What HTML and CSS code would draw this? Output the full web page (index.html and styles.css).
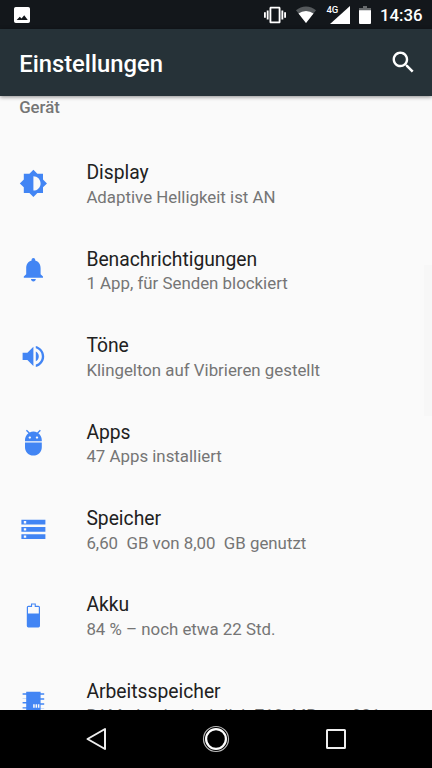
FILE: index.html
```html
<!DOCTYPE html>
<html lang="de">
<head>
<meta charset="utf-8">
<title>Einstellungen</title>
<link rel="stylesheet" href="styles.css">
</head>
<body>
<div class="screen">
  <div class="status">
    <svg class="st-photo" viewBox="0 0 18 18"><path fill="#fff" fill-rule="evenodd" d="M2 0h14q2 0 2 2v14q0 2-2 2H2q-2 0-2-2V2q0-2 2-2zM3 14.6h12.5l-4-5.2-3 3.6-2-2z"/></svg>
    <span class="spacer"></span>
    <svg class="st-vib" viewBox="0 0 24 24"><path fill="#fff" d="M0 15h2V9H0v6zm3 2h2V7H3v10zm19-8v6h2V9h-2zm-3 8h2V7h-2v10zM16.500 3h-9C6.670 3 6 3.670 6 4.500v15c0 .830.670 1.500 1.500 1.500h9c.830 0 1.500-.670 1.500-1.500v-15c0-.830-.670-1.500-1.500-1.500zM16 19H8V5h8v14z"/></svg>
    <svg class="st-wifi" viewBox="0 0 20 17"><path fill="#55595c" d="M10 17 0 4.300Q4.300.500 10 .500T20 4.300z"/><path fill="#fff" d="M10 17 2.500 7.500Q5.800 5 10 5t7.500 2.500z"/></svg>
    <span class="net"><span class="gen">4G</span><svg class="st-cell" viewBox="0 0 20 18"><path fill="#fff" d="M20 0v18H0z"/></svg></span>
    <svg class="st-bat" viewBox="0 0 12 18"><path fill="#666a6c" d="M4 0h4v2h4v3H0V2h4z"/><path fill="#fff" d="M0 4.200h12V17q0 1-1 1H1q-1 0-1-1z"/></svg>
    <span class="clock">14:36</span>
  </div>
  <header class="bar">
    <h1>Einstellungen</h1>
    <svg class="search" viewBox="0 0 24 24"><path fill="#fff" d="M15.500 14h-.790l-.280-.270C15.410 12.590 16 11.110 16 9.500 16 5.910 13.090 3 9.500 3S3 5.910 3 9.500 5.910 16 9.500 16c1.610 0 3.090-.590 4.230-1.570l.270.280v.790l5 4.990L20.490 19l-4.990-5zm-6 0C7.010 14 5 11.990 5 9.500S7.010 5 9.500 5 14 7.010 14 9.500 11.990 14 9.500 14z"/></svg>
  </header>
  <main class="list">
    <h2>Gerät</h2>
    <div class="row"><svg class="icon" viewBox="0 0 24 24"><path d="M20 15.310L23.310 12 20 8.690V4h-4.690L12 .690 8.690 4H4v4.690L.690 12 4 15.310V20h4.690L12 23.310 15.310 20H20v-4.690zM12 18V6c3.310 0 6 2.690 6 6s-2.690 6-6 6z"/></svg><div class="text"><div class="title">Display</div><div class="sub">Adaptive Helligkeit ist AN</div></div></div>
    <div class="row"><svg class="icon" viewBox="0 0 24 24"><path d="M12 22c1.100 0 2-.900 2-2h-4c0 1.100.890 2 2 2zm6-6v-5c0-3.070-1.640-5.640-4.500-6.320V4c0-.830-.670-1.500-1.500-1.500s-1.500.670-1.500 1.500v.680C7.630 5.360 6 7.920 6 11v5l-2 2v1h16v-1l-2-2z"/></svg><div class="text"><div class="title">Benachrichtigungen</div><div class="sub">1 App, für Senden blockiert</div></div></div>
    <div class="row"><svg class="icon" viewBox="0 0 24 24"><path d="M3 9v6h4l5 5V4L7 9H3zm13.500 3c0-1.770-1.020-3.290-2.500-4.030v8.050c1.480-.730 2.500-2.250 2.500-4.020zM14 3.230v2.060c2.890.860 5 3.540 5 6.710s-2.110 5.850-5 6.710v2.060c4.010-.910 7-4.490 7-8.770s-2.990-7.860-7-8.770z"/></svg><div class="text"><div class="title">Töne</div><div class="sub">Klingelton auf Vibrieren gestellt</div></div></div>
    <div class="row"><svg class="icon" viewBox="0 0 24 24"><path d="M5 16c0 3.870 3.130 7 7 7s7-3.130 7-7v-4H5v4zM16.120 4.370l2.100-2.100-.820-.830-2.300 2.310C14.160 3.280 13.120 3 12 3s-2.160.280-3.090.750L6.600 1.440l-.820.830 2.100 2.100C6.140 5.640 5 7.680 5 10v1h14v-1c0-2.320-1.140-4.360-2.880-5.630zM9 9c-.550 0-1-.450-1-1s.450-1 1-1 1 .450 1 1-.450 1-1 1zm6 0c-.550 0-1-.450-1-1s.450-1 1-1 1 .450 1 1-.450 1-1 1z"/></svg><div class="text"><div class="title">Apps</div><div class="sub">47 Apps installiert</div></div></div>
    <div class="row"><svg class="icon" viewBox="0 0 24 24"><path d="M2 20h20v-4H2v4zm2-3h2v2H4v-2zM2 4v4h20V4H2zm4 3H4V5h2v2zm-4 7h20v-4H2v4zm2-3h2v2H4v-2z"/></svg><div class="text"><div class="title">Speicher</div><div class="sub">6,60&nbsp; GB von 8,00&nbsp; GB genutzt</div></div></div>
    <div class="row"><svg class="icon" viewBox="0 0 24 24"><path fill-rule="evenodd" d="M10 2h4v2h2.200q1.300 0 1.300 1.300v15.400q0 1.300-1.300 1.300H7.800Q6.500 22 6.500 20.700V5.300Q6.500 4 7.800 4H10zM10.900 3v1.900H7.500V10.500h9V4.900h-3.400V3z"/></svg><div class="text"><div class="title">Akku</div><div class="sub">84 % – noch etwa 22 Std.</div></div></div>
    <div class="row"><svg class="icon" viewBox="0 0 24 24"><path fill-rule="evenodd" d="M6 4h12v1.200h3v1.200h-3v3h3v1.200h-3v3h3v1.200h-3v3h3V18h-3v3H6v-3H3v-1.200h3v-3H3v-1.200h3v-3H3V9.400h3v-3H3V5.200h3zM11.800 14.300v3h1.300v-3zm2 0v3h1.300v-3zm2 0v3h1.200v-3z"/></svg><div class="text"><div class="title">Arbeitsspeicher</div><div class="sub">RAM: durchschnittlich 718&nbsp; MB von 921</div></div></div>
    <span class="scrollbar"></span>
  </main>
  <nav class="nav">
    <svg viewBox="0 0 28 28"><path d="M23 4v20L5.500 14z" fill="none" stroke="#eee" stroke-width="2" stroke-linejoin="round"/></svg>
    <svg viewBox="0 0 28 28" fill="none"><circle cx="14" cy="14" r="12.500" stroke="#bbb" stroke-width="1.200"/><circle cx="14" cy="14" r="9.900" stroke="#fff" stroke-width="2.200"/></svg>
    <svg viewBox="0 0 28 28"><rect x="5" y="5" width="18" height="18" rx=".5" fill="none" stroke="#eee" stroke-width="2"/></svg>
  </nav>
</div>
</body>
</html>
```
FILE: styles.css
```css
* { box-sizing: border-box; }
body { margin: 0; background: #fafafa; font-family: Roboto, "Noto Sans", sans-serif; }
svg { display: block; flex: none; }
.screen { display: flex; flex-direction: column; width: 432px; height: 768px; overflow: hidden; }
.status { display: flex; align-items: center; flex: none; height: 29px; padding: 0 9.5px 0 14px; background: #13171b; color: #fff; }
.st-photo { width: 16px; height: 16px; }
.spacer { flex: 1; }
.st-vib { width: 22px; height: 22px; margin-right: 10px; }
.st-wifi { width: 20px; height: 17px; margin-right: 10px; }
.net { display: flex; align-items: flex-start; margin-right: 9px; }
.gen { width: 4px; margin-top: -1px; font-size: 9.500px; line-height: 10px; font-weight: 500; }
.st-cell { width: 20px; height: 18px; }
.st-bat { width: 12px; height: 18px; margin-right: 8.500px; }
.clock { font-size: 16.800px; line-height: 28px; font-weight: 500; }
.bar { position: relative; z-index: 1; display: flex; align-items: center; justify-content: space-between; flex: none; height: 67px; padding: 0 14.500px 0 19.200px; background: #263238; color: #fff; box-shadow: 0 1px 4px rgba(0, 0, 0, .45); }
h1 { margin: 2px 0 0; font-size: 23.800px; line-height: 32px; font-weight: 500; }
.search { width: 28.800px; height: 28.800px; }
.list { position: relative; flex: 1; min-height: 0; overflow: hidden; }
h2 { height: 44.200px; margin: 0; padding: 0 19.200px; color: #757575; font-size: 16.800px; line-height: 22px; font-weight: 500; }
.row { display: flex; align-items: center; height: 86.400px; padding-left: 19.200px; }
.icon { width: 28.800px; height: 28.800px; margin-right: 38.400px; fill: #4285f4; }
.text { padding-top: 2px; }
.title { color: #212121; font-size: 19.300px; line-height: 25.500px; }
.sub { color: #757575; font-size: 16.850px; line-height: 22.300px; white-space: nowrap; }
.scrollbar { position: absolute; top: 169px; right: 0; width: 8px; height: 151px; background: #f7f7f7; }
.nav { display: flex; align-items: center; justify-content: center; gap: 92px; flex: none; height: 57.600px; background: #000; }
.nav svg { width: 28px; height: 28px; }
```
